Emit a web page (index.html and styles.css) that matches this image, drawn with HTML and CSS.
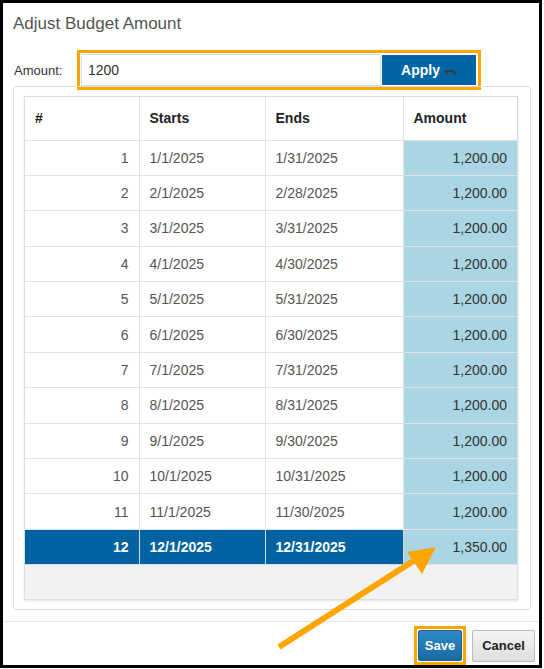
FILE: index.html
```html
<!DOCTYPE html>
<html lang="en">
<head>
  <meta charset="UTF-8">
  <title>Adjust Budget Amount</title>
  <link rel="stylesheet" href="styles.css">
</head>
<body>
<div class="dialog">
  <div class="dialog-title">Adjust Budget Amount</div>

  <div class="amount-row">
    <label class="amount-label" for="amount">Amount:</label>
    <div class="callout amount-box">
      <input id="amount" class="amount-input" type="text" value="1200">
      <button class="btn btn-apply">Apply
        <svg class="apply-icon" width="14" height="10" viewBox="0 0 14 10">
          <path d="M12.5 8 C11 3.5 6 2.5 3 5" fill="none" stroke="#3a3a3a" stroke-width="2"/>
          <path d="M0.5 4.5 L5 2.5 L4.5 7.5 Z" fill="#3a3a3a"/>
        </svg>
      </button>
    </div>
  </div>

  <div class="panel">
    <div class="grid-wrap">
      <table class="grid">
        <thead>
          <tr><th class="col-num">#</th><th class="col-start">Starts</th><th class="col-end">Ends</th><th class="col-amt">Amount</th></tr>
        </thead>
        <tbody>
          <tr><td class="num">1</td><td>1/1/2025</td><td>1/31/2025</td><td class="amt">1,200.00</td></tr>
          <tr><td class="num">2</td><td>2/1/2025</td><td>2/28/2025</td><td class="amt">1,200.00</td></tr>
          <tr><td class="num">3</td><td>3/1/2025</td><td>3/31/2025</td><td class="amt">1,200.00</td></tr>
          <tr><td class="num">4</td><td>4/1/2025</td><td>4/30/2025</td><td class="amt">1,200.00</td></tr>
          <tr><td class="num">5</td><td>5/1/2025</td><td>5/31/2025</td><td class="amt">1,200.00</td></tr>
          <tr><td class="num">6</td><td>6/1/2025</td><td>6/30/2025</td><td class="amt">1,200.00</td></tr>
          <tr><td class="num">7</td><td>7/1/2025</td><td>7/31/2025</td><td class="amt">1,200.00</td></tr>
          <tr><td class="num">8</td><td>8/1/2025</td><td>8/31/2025</td><td class="amt">1,200.00</td></tr>
          <tr><td class="num">9</td><td>9/1/2025</td><td>9/30/2025</td><td class="amt">1,200.00</td></tr>
          <tr><td class="num">10</td><td>10/1/2025</td><td>10/31/2025</td><td class="amt">1,200.00</td></tr>
          <tr><td class="num">11</td><td>11/1/2025</td><td>11/30/2025</td><td class="amt">1,200.00</td></tr>
          <tr class="selected"><td class="num">12</td><td>12/1/2025</td><td>12/31/2025</td><td class="amt">1,350.00</td></tr>
        </tbody>
      </table>
      <div class="grid-empty"></div>
    </div>
  </div>

  <div class="dialog-footer">
    <div class="callout save-box">
      <button class="btn btn-save">Save</button>
    </div>
    <button class="btn btn-cancel">Cancel</button>
  </div>

  <!-- pointer from Save to the edited amount -->
  <svg class="pointer" width="542" height="668" viewBox="0 0 542 668">
    <line x1="279" y1="647" x2="418" y2="558" stroke="#ffa500" stroke-width="6"/>
    <polygon points="436,547 407,552 422,574" fill="#ffa500"/>
  </svg>
</div>
</body>
</html>
```

FILE: styles.css
```css
* {
    margin: 0;
    padding: 0;
    box-sizing: border-box;
}

body {
    font-family: "Liberation Sans", Arial, sans-serif;
    background-color: #fff;
}

.dialog {
    position: relative;
    width: 542px;
    height: 668px;
    border: 3px solid #000;
    background-color: #fff;
    display: flex;
    flex-direction: column;
}

.dialog-title {
    font-size: 17px;
    color: #555;
    padding: 11px 0 0 10px;
    height: 48px;
}

.amount-row {
    display: flex;
    align-items: center;
    height: 40px;
}

.amount-label {
    font-size: 13px;
    color: #333;
    padding-left: 11px;
    width: 74px;
}

.callout {
    border: 3px solid #ffa500;
}

.amount-box {
    display: flex;
    align-items: center;
    width: 404px;
    height: 40px;
    padding: 1px 2px 1px 1px;
}

.amount-input {
    width: 300px;
    height: 32px;
    border: 1px solid #ddd;
    padding-left: 6px;
    font-family: inherit;
    font-size: 14px;
    color: #333;
    outline: none;
    margin-right: 1px;
}

.btn {
    font-family: inherit;
    font-weight: bold;
    font-size: 13px;
    cursor: pointer;
}

.btn-apply {
    width: 94px;
    height: 30px;
    border: none;
    background-color: #0065a4;
    color: #fff;
    font-size: 14px;
    display: flex;
    align-items: center;
    justify-content: center;
    gap: 3px;
}

.apply-icon {
    margin-top: 3px;
}

.panel {
    margin: -4px 8px 0 10px;
    height: 524px;
    border: 1px solid #ddd;
    border-radius: 4px;
    padding: 9px 12px 9px 10px;
}

.grid-wrap {
    height: 504px;
    border: 1px solid #ddd;
    background-color: #f2f2f2;
    box-shadow: 0 1px 2px rgba(0, 0, 0, 0.12);
    display: flex;
    flex-direction: column;
}

.grid {
    width: 100%;
    border-collapse: collapse;
    background-color: #fff;
    font-size: 14px;
}

.grid th,
.grid td {
    border: 1px solid #e3e3e3;
    height: 35.4px;
    padding: 0 10px;
    white-space: nowrap;
}

.grid tr > :first-child {
    border-left: none;
}

.grid tr > :last-child {
    border-right: none;
}

.grid thead th {
    border-top: none;
    height: 43px;
    text-align: left;
    color: #222;
    font-weight: bold;
}

.col-num { width: 114px; }
.col-start { width: 126px; }
.col-end { width: 138px; }

.grid td {
    color: #555;
}

.grid td.num {
    text-align: right;
}

.grid td.amt {
    background-color: #aad6e3;
    color: #333;
    text-align: right;
}

.grid tr.selected td {
    background-color: #0063a1;
    color: #fff;
    font-weight: bold;
    border-color: #cfdbe6;
}

.grid tr.selected td.amt {
    background-color: #aad6e3;
    color: #333;
    font-weight: normal;
    border-color: #e3e3e3;
}

.grid-empty {
    flex: 1;
}

.dialog-footer {
    margin-top: 11px;
    border-top: 1px solid #e5e5e5;
    display: flex;
    justify-content: flex-end;
    align-items: center;
    gap: 6px;
    padding: 4px 4px 0 0;
}

.save-box {
    padding: 1px;
    height: 39px;
    width: 52px;
}

.btn-save {
    width: 44px;
    height: 31px;
    border: 1px solid #1d5f8f;
    border-radius: 2px;
    background: linear-gradient(#2d8ac7, #1b6aa3);
    color: #fff;
}

.btn-cancel {
    width: 63px;
    height: 32px;
    border: 1px solid #bbb;
    border-radius: 2px;
    background: linear-gradient(#f4f4f4, #dedede);
    color: #222;
}

.pointer {
    position: absolute;
    top: -3px;
    left: -3px;
    pointer-events: none;
}
```
